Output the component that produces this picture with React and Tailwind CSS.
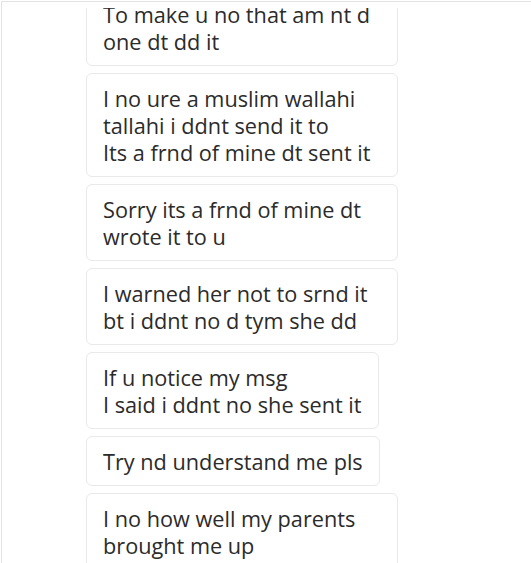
import React from 'react';

const messages = [
    { lines: ['To make u no that am nt d', 'one dt dd it'], full: true },
    { lines: ['I no ure a muslim wallahi', 'tallahi i ddnt send it to', 'Its a frnd of mine dt sent it'], full: true },
    { lines: ['Sorry its a frnd of mine dt', 'wrote it to u'], full: true },
    { lines: ['I warned her not to srnd it', 'bt i ddnt no d tym she dd'], full: true },
    { lines: ['If u notice my msg', 'I said i ddnt no she sent it'], full: false },
    { lines: ['Try nd understand me pls'], full: false },
    { lines: ['I no how well my parents', 'brought me up'], full: true },
];

const Bubble = ({ lines, full }) => (
    <div
        className={`${full ? 'w-[312px]' : 'w-fit'} rounded-[6px] border border-[#e9e9e9] bg-white pl-[16px] pr-[16px] pt-[11px] pb-[10px] text-[21.7px] leading-[27px] text-[#2b2b2b] whitespace-nowrap`}
    >
        {lines.map((l, i) => (
            <div key={i}>{l}</div>
        ))}
    </div>
);

export default function App() {
    return (
        <div className="w-[531px] h-[563px] bg-white pt-px pl-px overflow-hidden" style={{ fontFamily: '"Open Sans", "Noto Sans", sans-serif' }}>
            <div className="h-full border-t border-l border-[#e4e4e4] pt-[6px] flex flex-col">
                <div className="flex-1 overflow-hidden">
                    <div className="-mt-[19px] pl-[84px] flex flex-col gap-[7px]">
                        {messages.map((m, i) => (
                            <Bubble key={i} {...m} />
                        ))}
                    </div>
                </div>
            </div>
        </div>
    );
}
